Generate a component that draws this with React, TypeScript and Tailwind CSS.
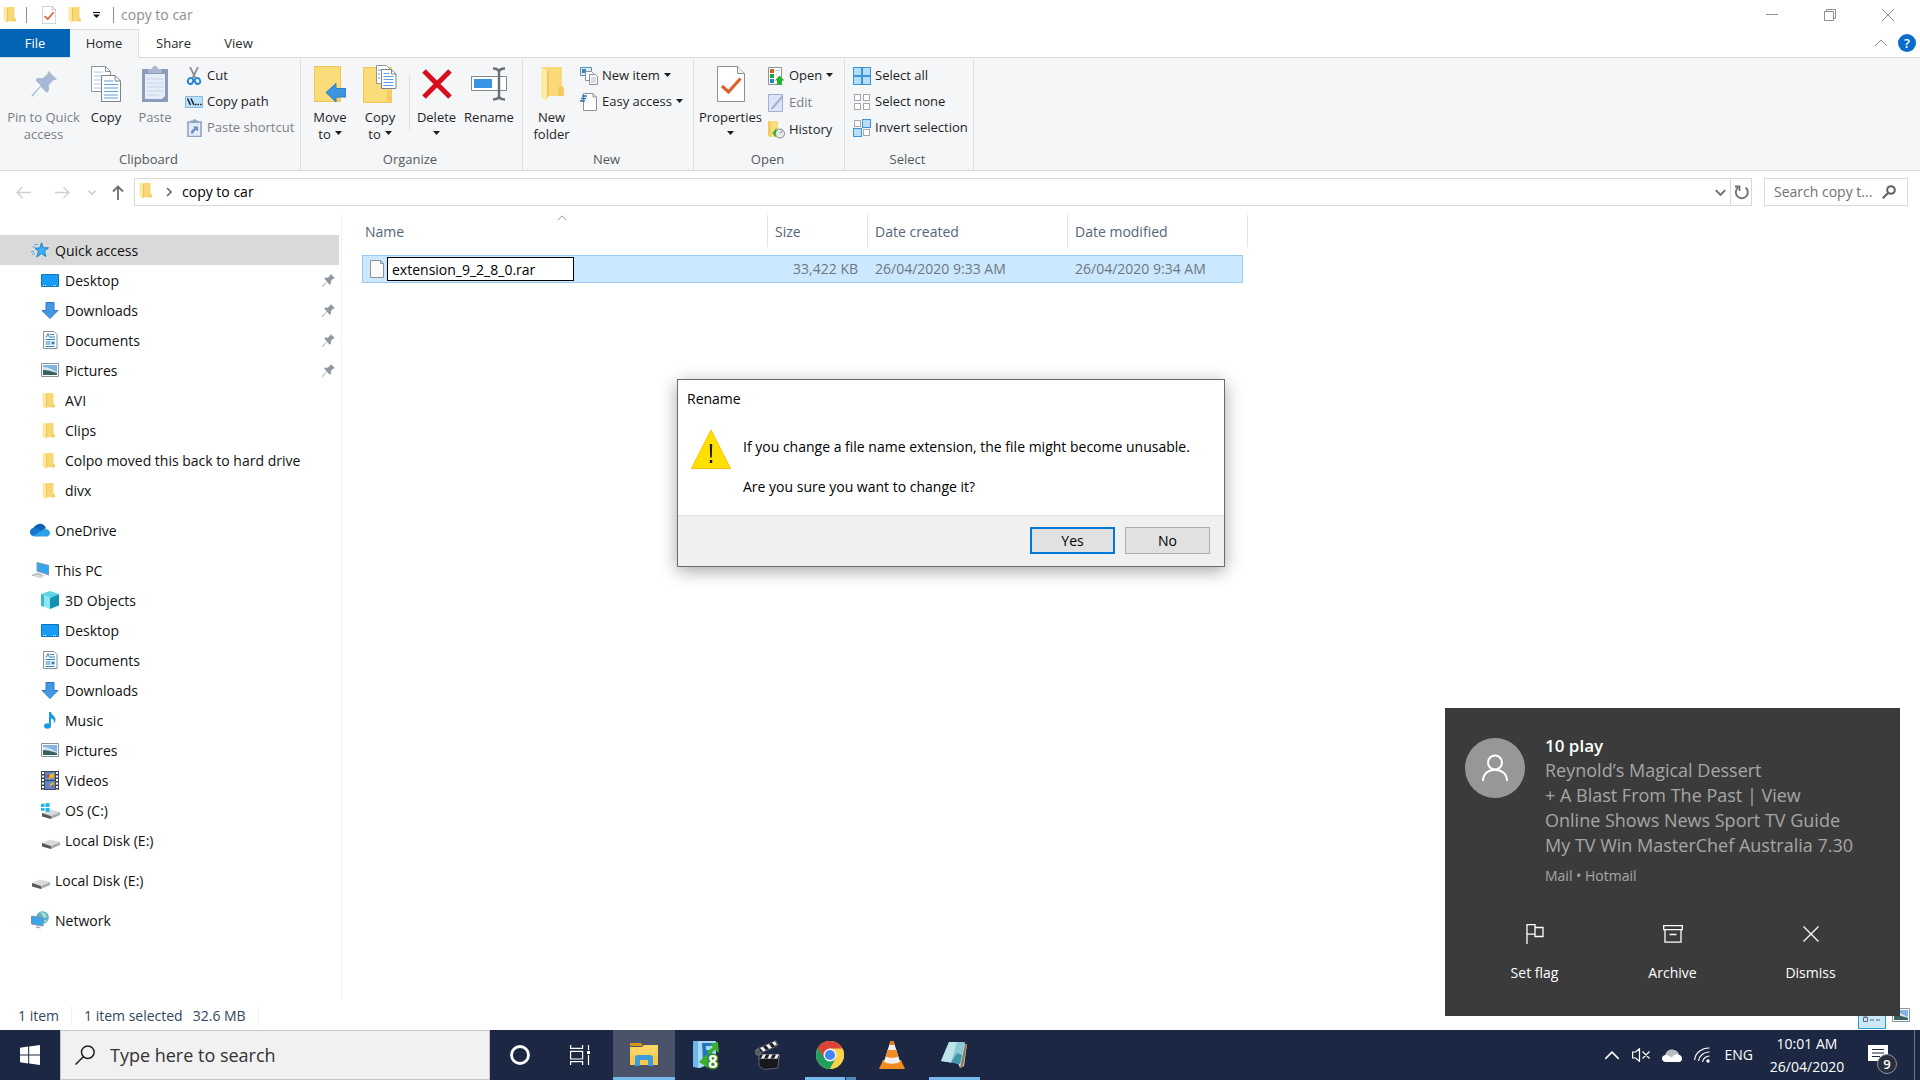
import { useState } from "react";
import type { ReactNode } from "react";

/* ---------- icons ---------- */

function FolderIcon({ className = "w-[13px] h-[17px]" }: { className?: string }) {
  return (
    <svg className={className} viewBox="0 0 13 17" fill="none">
      <path d="M3.5 1h8v12.5l1.2 1.8H4z" fill="#f8d775" />
      <path d="M11.5 11.5l1.3 1v2.8H9z" fill="#f5cd5f" />
      <path d="M.5.5L5 2v12.6L3.6 16.8.5 14.8z" fill="#fde9a6" />
      <path d="M3.9 2v14.6L5 14.8V2z" fill="#eec55a" />
    </svg>
  );
}

function PinIcon({ className, color }: { className: string; color: string }) {
  return (
    <svg className={className} viewBox="0 0 26 26" fill={color}>
      <path d="M17.5 0L26 8.500l-2.500.6-.8-.3-5 5.400.3 5.300-2.300 2.200-6-6L1.800 25.300.3 25.700l.4-1.500 8.900-9.800-5.300-5.300 2.200-2.100 5.200.3 5.200-4.900-.3-.9z" />
    </svg>
  );
}

function CheckPage({ className }: { className: string }) {
  return (
    <svg className={className} viewBox="0 0 28 36" fill="none">
      <path d="M.5.500h20l7 7v28H.5z" fill="#fff" stroke="#8b8f94" />
      <path d="M20.500.5v7h7" fill="#eef0f2" stroke="#8b8f94" />
      <path d="M5 20l6.500 6L23.500 12.500" stroke="#e0602b" strokeWidth="3.200" />
    </svg>
  );
}

function CopyIcon() {
  return (
    <svg className="w-[30px] h-9" viewBox="0 0 30 36" fill="none">
      <path d="M.5.500h14l5 5v20H.5z" fill="#fff" stroke="#8f959b" />
      <path d="M14.500.5v5h5" stroke="#8f959b" />
      <path d="M3 6h9M3 10h9M3 14h9M3 18h9M3 22h7" stroke="#a9c9ea" strokeWidth="1.200" />
      <path d="M10.500 9.500h13.500l5.500 5.500v20.500h-19z" fill="#fff" stroke="#7d838a" />
      <path d="M24 9.500V15h5.500" stroke="#7d838a" />
      <path d="M13 15h9M13 18.500h14M13 22h14M13 25.500h14M13 29h14M13 32h14" stroke="#5d9fe0" strokeWidth="1.200" />
    </svg>
  );
}

function PasteIcon() {
  return (
    <svg className="w-[26px] h-9" viewBox="0 0 26 36" fill="none">
      <path d="M0 3h26v33H0z" fill="#8c9cb8" />
      <path d="M3 8h20v22l-3 3H3z" fill="#e6ecf7" />
      <path d="M5 13h16M5 17h16M5 21h16M5 25h16M5 29h12" stroke="#c8d4ea" />
      <path d="M6 7V3h4c0-4 6-4 6 0h4v4z" fill="#a9b7cf" />
    </svg>
  );
}

function CutIcon() {
  return (
    <svg className="w-[18px] h-[18px]" viewBox="0 0 18 18" fill="none">
      <path d="M5 0l5.500 11M13 0L7.500 11" stroke="#8d9297" strokeWidth="1.800" />
      <ellipse cx="5.500" cy="14" rx="2.600" ry="3" transform="rotate(20 5.500 14)" stroke="#2a86d1" strokeWidth="2" />
      <ellipse cx="12.500" cy="14" rx="2.600" ry="3" transform="rotate(-20 12.500 14)" stroke="#2a86d1" strokeWidth="2" />
    </svg>
  );
}

function CopyPathIcon() {
  return (
    <svg className="w-[18px] h-3" viewBox="0 0 18 12" fill="none">
      <path d="M.5.500h17v11H.5z" fill="#bfe0fa" stroke="#86b7e0" />
      <path d="M2.500 2.500l3 6.500M6 2.500L9 9" stroke="#10202e" strokeWidth="1.500" />
      <path d="M10 8.500h1.500M12.500 8.500H14M15 8.500h1.500" stroke="#10202e" strokeWidth="1.500" />
    </svg>
  );
}

function PasteShortcutIcon() {
  return (
    <svg className="w-[18px] h-[18px]" viewBox="0 0 18 18" fill="none">
      <path d="M3 3h13v14.500H3z" fill="#e3ebf8" stroke="#8fa3c6" strokeWidth="1.600" />
      <path d="M6 4V1.500h2C8.200-.3 10.800-.3 11 1.500h2V4z" fill="#8fa3c6" />
      <path d="M6 14.500c0-3 1-4 3.500-5.200L8 7.500h5v5l-1.500-1.600C9.500 11.500 8.500 12.500 8.500 14.500z" fill="#6f8bbd" />
    </svg>
  );
}

function MoveToIcon() {
  return (
    <svg className="w-8 h-9" viewBox="0 0 32 36" fill="none">
      <path d="M.5.500h26v35H.5z" fill="#fbdc7b" stroke="#f0c652" />
      <path d="M22 25h5v11h-5z" fill="#f4cd62" />
      <path d="M12 26.500l10-9v5h10v8.500H22v5z" fill="#3c93df" stroke="#2c7cc4" />
    </svg>
  );
}

function CopyToIcon() {
  return (
    <svg className="w-[34px] h-[38px]" viewBox="0 0 34 38" fill="none">
      <path d="M.5 2.500h28v35H.5z" fill="#fbdc7b" stroke="#f0c652" />
      <path d="M24 25h5v13h-5z" fill="#f4cd62" />
      <path d="M13.500.500h10l3 3v15h-13z" fill="#fff" stroke="#8f959b" />
      <path d="M18.500 4.500h10l4.500 4.500v14.500H18.500z" fill="#fff" stroke="#7d838a" />
      <path d="M28.500 4.500V9H33" stroke="#7d838a" />
      <path d="M20.500 8.500h6M20.500 11.500h10M20.500 14.500h10M20.500 17.500h10M20.500 20.500h10M15 5h3M15 9h2M15 13h2" stroke="#5d9fe0" />
    </svg>
  );
}

function DeleteIcon() {
  return (
    <svg className="w-8 h-8" viewBox="0 0 32 32" fill="none" stroke="#d70f1d" strokeWidth="5">
      <path d="M3 3l26 26M29 3L3 29" />
    </svg>
  );
}

function RenameIcon() {
  return (
    <svg className="w-9 h-[34px]" viewBox="0 0 36 34" fill="none">
      <path d="M.5 9.500h35v14H.5z" fill="#fff" stroke="#83888d" />
      <path d="M3 12h18v9H3z" fill="#3793e4" />
      <path d="M22 1.500c4 0 6 1 6 4v23c0 3-2 4-6 4M34 1.500c-4 0-6 1-6 4v23c0 3 2 4 6 4" stroke="#6b7075" strokeWidth="2.400" />
    </svg>
  );
}

function NewFolderIcon() {
  return (
    <svg className="w-6 h-[34px]" viewBox="0 0 24 34" fill="none">
      <path d="M1 0h21v19l2 2v8H7z" fill="#f9d978" />
      <path d="M18 20l5-1 1 10h-6z" fill="#f3ca5e" />
      <path d="M1 0l8 4v24l-3.500 6L1 30z" fill="#fdeaa9" />
      <path d="M7 3.500v28L9 28V4z" fill="#eec55a" />
    </svg>
  );
}

function NewItemIcon() {
  return (
    <svg className="w-[18px] h-[18px]" viewBox="0 0 18 18" fill="none">
      <path d="M.5.500h11v8H.5z" fill="#d7ecfa" stroke="#5b8db5" />
      <path d="M2 2h4v4H2z" fill="#3f83b5" />
      <path d="M5.500 4.500h6l2 2v7h-8z" fill="#fff" stroke="#8c9298" />
      <path d="M9.500 7.500h6l2 2v8h-8z" fill="#fff" stroke="#8c9298" />
      <path d="M11 11h5M11 13h5M11 15h5" stroke="#b9b6d4" />
    </svg>
  );
}

function EasyAccessIcon() {
  return (
    <svg className="w-[18px] h-[18px]" viewBox="0 0 18 18" fill="none">
      <path d="M3.500.500H13L16.500 4v13.500h-13z" fill="#fff" stroke="#8c9298" />
      <path d="M13 .5V4h3.500" stroke="#8c9298" />
      <path d="M2 3h5M1 5.500h5M0 8h5" stroke="#2a6ea6" strokeWidth="1.400" />
    </svg>
  );
}

function OpenIcon() {
  return (
    <svg className="w-[17px] h-[18px]" viewBox="0 0 17 18" fill="none">
      <path d="M.5.500h13v17H.5z" fill="#fff" stroke="#8c9298" />
      <path d="M2 2h4v4H2z" fill="#dd5a1f" />
      <path d="M2 7h4v4H2z" fill="#24a336" />
      <path d="M2 12h4v4H2z" fill="#2a7dcb" />
      <path d="M7.500 3.500H12M7.500 8H9" stroke="#c2c6ca" />
      <path d="M11.500 8.500l5 5H14V18H9v-4.500H6.800z" fill="#2bb02f" />
    </svg>
  );
}

function EditIcon() {
  return (
    <svg className="w-[17px] h-[18px]" viewBox="0 0 17 18" fill="none">
      <path d="M.5.500h14v17H.5z" fill="#dbe5f6" stroke="#9fb2d3" />
      <path d="M15.500 3L5.500 14.500 3 16l.8-3L14 1.500z" fill="#a3b3cd" />
    </svg>
  );
}

function HistoryIcon() {
  return (
    <svg className="w-[17px] h-[18px]" viewBox="0 0 17 18" fill="none">
      <path d="M0 0h10v16H3L0 15z" fill="#fbdc7b" />
      <path d="M0 0l3 1v15l-3-1z" fill="#f3cb5f" />
      <circle cx="12" cy="12.500" r="4.500" fill="#e9ecee" stroke="#868b90" />
      <path d="M12 12.500l2.500-3" stroke="#6b7075" />
      <path d="M4 12.500l4.500-5.500v3c-1.500 1.500-1.500 4 0 6-2-.3-3-1.500-3-3.500z" fill="#2bb02f" />
    </svg>
  );
}

const CELLS = [
  [1, 1],
  [10, 1],
  [1, 10],
  [10, 10],
];

function SelectIcon({ picked }: { picked: number[] }) {
  return (
    <svg className="w-[18px] h-[18px]" viewBox="0 0 18 18">
      {CELLS.map(([x, y], i) =>
        picked.includes(i) ? (
          <rect key={i} x={x - 0.5} y={y - 0.5} width="8" height="8" fill="#b5defc" stroke="#3f94d6" />
        ) : (
          <rect key={i} x={x + 0.5} y={y + 0.5} width="6" height="6" fill="#fff" stroke="#a5a9ad" />
        )
      )}
    </svg>
  );
}

function StarIcon() {
  return (
    <svg className="w-[18px] h-[17px]" viewBox="0 0 18 17" fill="none">
      <path d="M10.500.8l1.800 5h5.200l-4 3.300 1.300 5.400-4.300-3-4.700 3.600 1.700-5.700-3.500-3.200 4.800-.2z" fill="#3db1f5" stroke="#1e7fc4" />
      <path d="M3 2.500h4M1.500 5h3M0 9.500h3M1 12h3" stroke="#5aa9dd" />
    </svg>
  );
}

function DesktopIcon() {
  return (
    <svg className="w-[18px] h-[13px]" viewBox="0 0 18 13" fill="none">
      <path d="M.5.500h17v12H.5z" fill="#189bf5" stroke="#0f76be" />
      <path d="M2 11.500h3M12 11.500h4" stroke="#fff" strokeDasharray="1 1" />
    </svg>
  );
}

function DownloadIcon() {
  return (
    <svg className="w-[18px] h-[17px]" viewBox="0 0 18 17">
      <path d="M5 .5h8v8h4L9 16.500 1 8.500h4z" fill="#4398e4" stroke="#2f7cc4" />
    </svg>
  );
}

function DocumentIcon() {
  return (
    <svg className="w-[18px] h-[18px]" viewBox="0 0 18 18" fill="none">
      <path d="M2.500.500h10.500l3 3v14H2.500z" fill="#fff" stroke="#8a8f94" />
      <path d="M5 6.500l2-4 1.500 4M9 3.500h4M9 6h5M4.500 8.500h9.500M4.500 11h5M4.500 13h5M4.500 15.500h9" stroke="#2b83c6" />
      <path d="M10.500 10.500h3v3h-3z" fill="#3e7fb2" />
    </svg>
  );
}

function PictureIcon() {
  return (
    <svg className="w-[18px] h-[14px]" viewBox="0 0 18 14" fill="none">
      <path d="M.5.500h17v13H.5z" fill="#fff" stroke="#8a93a0" />
      <path d="M2 2h14v10H2z" fill="#7fb4e3" />
      <path d="M2 4c5 0 8 2 14 5v1H2z" fill="#d3e6f2" />
      <path d="M2 7c4 0 8 1 14 3v2H2z" fill="#37635f" />
    </svg>
  );
}

function OneDriveIcon() {
  return (
    <svg className="w-5 h-[14px]" viewBox="0 0 20 14">
      <path d="M4 8a4 4 0 0 1 1-5 6.500 6.500 0 0 1 11 2l-5 4z" fill="#0f62b5" />
      <path d="M0 9.500A4 4 0 0 1 5 5c3 0 4 1 6 2.500L6 13H4a4 4 0 0 1-4-3.500z" fill="#1476cc" />
      <path d="M3 13l8-5c2-3 8-3 9 1.500.3 2-1.200 4-3.500 4H4.500z" fill="#2aa1ea" />
    </svg>
  );
}

function PcIcon() {
  return (
    <svg className="w-[18px] h-[17px]" viewBox="0 0 18 17">
      <path d="M6 .5l12 3v9.500L6 9z" fill="#35a5ee" stroke="#8798a6" />
      <path d="M0 13l7-2.500 7 3-5 3z" fill="#d4d8db" />
      <path d="M1 13.500l6-2 4 1.800" stroke="#aab0b5" fill="none" />
    </svg>
  );
}

function CubeIcon() {
  return (
    <svg className="w-[18px] h-[18px]" viewBox="0 0 18 18">
      <path d="M9 0l9 3-9 4L0 3z" fill="#5fd4e6" />
      <path d="M0 3l9 4v11l-9-3.500z" fill="#8ee6f0" />
      <path d="M18 3L9 7v11l9-3.500z" fill="#1493b5" />
      <path d="M0 3l3 1.300V16l-3-1.500z" fill="#36b8d0" />
    </svg>
  );
}

function MusicIcon() {
  return (
    <svg className="w-[18px] h-[17px]" viewBox="0 0 18 17">
      <ellipse cx="6.500" cy="14" rx="3.500" ry="2.800" fill="#1a9be4" />
      <path d="M8 0h2c.3 3 4.500 4 4.500 7.500 0 1.500-.6 3-1.700 4 .8-3-.6-4.500-2.800-5V14H8z" fill="#1a9be4" />
    </svg>
  );
}

function VideoIcon() {
  return (
    <svg className="w-[18px] h-[19px]" viewBox="0 0 18 19" fill="none">
      <path d="M0 0h18v19H0z" fill="#44484d" />
      <path d="M2 1v18M16 1v18" stroke="#fff" strokeWidth="2" strokeDasharray="2 1.500" />
      <path d="M4 1h10v8H4zM4 10h10v8H4z" fill="#5d84cf" />
      <path d="M9 3l4-1v5l-6 1zM9 13l3-2 1 2-4 3z" fill="#e4b52c" />
      <path d="M5 5l3-2v4zM10 15l2-1v3z" fill="#c0392b" />
    </svg>
  );
}

function DiskIcon({ windows = false }: { windows?: boolean }) {
  return (
    <svg className="w-[19px] h-[17px]" viewBox="0 0 19 17">
      <path d="M1 11l8-3.500 10 2.500-9 4z" fill="#d9dadb" />
      <path d="M1 11l9 3v3l-9-2.500z" fill="#55585b" />
      <path d="M10 14l9-4v3l-9 4z" fill="#a9acaf" />
      {windows && <path d="M0 2l3.500-.5V5H0zM4.500 1.300L8.500 1v4h-4zM0 6h3.500v3L0 8.500zM4.500 6h4v4l-4-.5z" fill="#1fb5e8" />}
    </svg>
  );
}

function NetworkIcon() {
  return (
    <svg className="w-[18px] h-[18px]" viewBox="0 0 18 18">
      <circle cx="11.500" cy="6.500" r="6.300" fill="#5cb0c9" />
      <path d="M9 1l5 1 2 4-3 1-2-3zM13 9l3 0-2 3z" fill="#a9dcc9" />
      <path d="M.5 5l11.500 2v8L.5 13z" fill="#3aa5e8" stroke="#7c93a3" />
      <path d="M5 15l4 1 1 1.500-5-.8z" fill="#9fb0bb" />
    </svg>
  );
}

function Chevron({ className, d = "M1 7l6-6 6 6", width = 1 }: { className: string; d?: string; width?: number }) {
  return (
    <svg className={className} viewBox="0 0 14 8" fill="none" stroke="currentColor" strokeWidth={width}>
      <path d={d} />
    </svg>
  );
}

function Caret() {
  return (
    <svg className="mb-[3px] w-[7px] h-1 shrink-0" viewBox="0 0 7 4" fill="#1e1e1e">
      <path d="M0 0h7L3.500 4z" />
    </svg>
  );
}

/* ---------- ribbon ---------- */

function BigButton({
  icon,
  label,
  second,
  caret,
  disabled,
  className,
}: {
  icon: ReactNode;
  label: string;
  second?: string;
  caret?: boolean;
  disabled?: boolean;
  className: string;
}) {
  return (
    <button
      disabled={disabled}
      className={`flex shrink-0 flex-col items-center whitespace-nowrap pt-1 text-[13px] leading-[17px] text-[#1f1f1f] disabled:text-[#7c7f82] ${className}`}
    >
      <span className="mb-1 flex h-[42px] shrink-0 items-center justify-center">{icon}</span>
      <span>{label}</span>
      {(second || caret) && (
        <span className="flex h-[17px] items-center gap-1">
          {second}
          {caret && <Caret />}
        </span>
      )}
    </button>
  );
}

function SmallButton({ icon, label, caret, disabled }: { icon: ReactNode; label: string; caret?: boolean; disabled?: boolean }) {
  return (
    <button
      disabled={disabled}
      className="flex h-[26px] items-center gap-1 whitespace-nowrap text-[13px] text-[#1f1f1f] disabled:text-[#7c7f82]"
    >
      <span className="flex w-[18px] justify-center">{icon}</span>
      <span>{label}</span>
      {caret && <Caret />}
    </button>
  );
}

function Group({ label, className, children }: { label: string; className: string; children: ReactNode }) {
  return (
    <section className={`flex shrink-0 flex-col border-r border-[#dcdfe2] ${className}`}>
      <div className="flex h-[90px]">{children}</div>
      <h2 className="pr-[3px] text-center text-[13px] leading-5 text-[#55585b]">{label}</h2>
    </section>
  );
}

function Ribbon() {
  return (
    <div className="flex h-[114px] border-y border-[#d7dadc] bg-[#f4f6f8] pt-px">
      <Group label="Clipboard" className="w-[301px]">
        <BigButton className="w-[87px]" disabled icon={<PinIcon className="w-[26px] h-[26px]" color="#a6b8d3" />} label="Pin to Quick" second="access" />
        <BigButton className="w-[38px]" icon={<CopyIcon />} label="Copy" />
        <BigButton className="w-[60px]" disabled icon={<PasteIcon />} label="Paste" />
        <div className="pt-1">
          <SmallButton icon={<CutIcon />} label="Cut" />
          <SmallButton icon={<CopyPathIcon />} label="Copy path" />
          <SmallButton icon={<PasteShortcutIcon />} label="Paste shortcut" disabled />
        </div>
      </Group>
      <Group label="Organize" className="w-[222px]">
        <BigButton className="ml-1 w-[50px]" icon={<MoveToIcon />} label="Move" second="to" caret />
        <BigButton className="w-[50px]" icon={<CopyToIcon />} label="Copy" second="to" caret />
        <span className="mt-4 ml-1 h-14 w-px bg-[#dcdfe2]" />
        <BigButton className="w-[53px]" icon={<DeleteIcon />} label="Delete" caret />
        <BigButton className="w-[52px]" icon={<RenameIcon />} label="Rename" />
      </Group>
      <Group label="New" className="w-[171px]">
        <BigButton className="w-[57px]" icon={<NewFolderIcon />} label="New" second="folder" />
        <div className="pt-1">
          <SmallButton icon={<NewItemIcon />} label="New item" caret />
          <SmallButton icon={<EasyAccessIcon />} label="Easy access" caret />
        </div>
      </Group>
      <Group label="Open" className="w-[151px]">
        <BigButton className="w-[73px]" icon={<CheckPage className="w-7 h-9" />} label="Properties" caret />
        <div className="flex flex-col gap-px pt-1">
          <SmallButton icon={<OpenIcon />} label="Open" caret />
          <SmallButton icon={<EditIcon />} label="Edit" disabled />
          <SmallButton icon={<HistoryIcon />} label="History" />
        </div>
      </Group>
      <Group label="Select" className="w-[129px]">
        <div className="pt-1 pl-2">
          <SmallButton icon={<SelectIcon picked={[0, 1, 2, 3]} />} label="Select all" />
          <SmallButton icon={<SelectIcon picked={[]} />} label="Select none" />
          <SmallButton icon={<SelectIcon picked={[1, 2]} />} label="Invert selection" />
        </div>
      </Group>
    </div>
  );
}

/* ---------- window top ---------- */

function TitleBar() {
  return (
    <header className="flex h-[29px] items-center justify-between pl-[3px] pr-[3px] text-[#8f8f8f]">
      <div className="flex items-center">
        <FolderIcon />
        <span className="ml-[10px] mr-[15px] h-4 w-px bg-[#8f8f8f]" />
        <CheckPage className="w-[14px] h-[18px]" />
        <span className="ml-3">
          <FolderIcon />
        </span>
        <button aria-label="Customize Quick Access Toolbar" className="ml-3">
          <svg className="w-[7px] h-[6px]" viewBox="0 0 7 6" fill="#111">
            <path d="M0 0h7v1H0zM0 2.500h7L3.500 6z" />
          </svg>
        </button>
        <span className="ml-[13px] mr-[7px] h-4 w-px bg-[#8f8f8f]" />
        <h1 className="text-sm">copy to car</h1>
      </div>
      <div className="flex">
        <button aria-label="Minimize" className="flex w-[58px] justify-center">
          <svg className="w-3 h-3" viewBox="0 0 12 12" fill="none" stroke="currentColor">
            <path d="M0 5.500h12" />
          </svg>
        </button>
        <button aria-label="Restore" className="flex w-[58px] justify-center">
          <svg className="w-3 h-3" viewBox="0 0 12 12" fill="none" stroke="currentColor">
            <path d="M.5 2.500h9v9h-9zM2.500 2.500v-2h9v9h-2" />
          </svg>
        </button>
        <button aria-label="Close" className="flex w-[58px] justify-center">
          <svg className="w-3 h-3" viewBox="0 0 12 12" fill="none" stroke="currentColor">
            <path d="M0 0l12 12M12 0L0 12" />
          </svg>
        </button>
      </div>
    </header>
  );
}

function Tabs() {
  return (
    <div className="flex h-7 items-stretch text-[13px] text-[#2b2b2b]">
      <button className="w-[70px] bg-[#0364b5] pt-[2px] text-white">File</button>
      <button className="relative z-10 -mb-px w-[69px] border border-b-0 border-l-0 border-[#dcdfe2] bg-[#f4f6f8]">Home</button>
      <button className="w-[69px] pt-[2px]">Share</button>
      <button className="w-[61px] pt-[2px]">View</button>
      <div className="ml-auto flex items-center gap-[10px] pr-1">
        <button aria-label="Minimize the Ribbon" className="text-[#8f8f8f]">
          <Chevron className="w-[14px] h-2" />
        </button>
        <button
          aria-label="Help"
          className="flex h-[18px] w-[18px] items-center justify-center rounded-full bg-[#0a6ccd] text-[13px] leading-none font-semibold text-white"
        >
          ?
        </button>
      </div>
    </div>
  );
}

function AddressRow() {
  return (
    <div className="flex h-11 items-start pt-[7px] pr-3">
      <div className="flex h-7 w-[134px] shrink-0 items-center pl-4">
        <button aria-label="Back" disabled className="text-[#cfcfcf]">
          <svg className="w-[15px] h-[13px]" viewBox="0 0 15 13" fill="none" stroke="currentColor" strokeWidth="1.300">
            <path d="M15 6.500H1M6.500 1L1 6.500 6.500 12" />
          </svg>
        </button>
        <button aria-label="Forward" disabled className="ml-6 text-[#cfcfcf]">
          <svg className="w-[15px] h-[13px]" viewBox="0 0 15 13" fill="none" stroke="currentColor" strokeWidth="1.300">
            <path d="M0 6.500h14M8.500 1L14 6.500 8.500 12" />
          </svg>
        </button>
        <button aria-label="Recent locations" className="ml-[18px] text-[#cfcfcf]">
          <Chevron className="w-2 h-[5px]" d="M1 1l6 6 6-6" width={3} />
        </button>
        <button aria-label="Up" className="ml-4 text-[#6d6d6d]">
          <svg className="w-3 h-[15px]" viewBox="0 0 12 15" fill="none" stroke="currentColor" strokeWidth="1.800">
            <path d="M6 15V1.500M1 6.500l5-5 5 5" />
          </svg>
        </button>
      </div>
      <div className="flex h-7 flex-1 items-center border border-[#d9d9d9] pl-1">
        <span className="-mt-[3px]">
          <FolderIcon />
        </span>
        <svg className="ml-[14px] w-[6px] h-[10px]" viewBox="0 0 6 10" fill="none" stroke="#6b6b6b" strokeWidth="1.600">
          <path d="M1 1l4 4-4 4" />
        </svg>
        <button className="ml-[10px] text-sm text-black">copy to car</button>
        <button aria-label="Previous locations" className="ml-auto px-1 text-[#6d6d6d]">
          <Chevron className="w-[11px] h-[7px]" d="M1 1l6 6 6-6" width={2.5} />
        </button>
        <button aria-label="Refresh" className="flex h-full w-[21px] items-center justify-center border-l border-[#d9d9d9] text-[#6d6d6d]">
          <svg className="w-[15px] h-[15px]" viewBox="0 0 15 15" fill="none" stroke="currentColor" strokeWidth="1.800">
            <path d="M11.500 2.500A6 6 0 1 1 4 2.600M1 1.500h4.500V6" />
          </svg>
        </button>
      </div>
      <label className="ml-3 flex h-7 w-[144px] items-center border border-[#d9d9d9] pl-[9px] pr-[11px]">
        <input
          aria-label="Search copy to car"
          placeholder="Search copy t..."
          className="w-0 min-w-0 flex-1 text-sm outline-none placeholder:text-[#717171]"
        />
        <svg className="w-[14px] h-[14px]" viewBox="0 0 14 14" fill="none" stroke="#5f5f5f" strokeWidth="2">
          <circle cx="9" cy="5" r="3.800" />
          <path d="M6.300 7.700L.8 13.200" />
        </svg>
      </label>
    </div>
  );
}

/* ---------- navigation pane ---------- */

type NavItem = { name: string; icon: ReactNode; pinned?: boolean };

const folder = <FolderIcon className="mr-[3px] w-[13px] h-[17px]" />;

const NAV: { root: NavItem; items: NavItem[] }[] = [
  {
    root: { name: "Quick access", icon: <StarIcon /> },
    items: [
      { name: "Desktop", icon: <DesktopIcon />, pinned: true },
      { name: "Downloads", icon: <DownloadIcon />, pinned: true },
      { name: "Documents", icon: <DocumentIcon />, pinned: true },
      { name: "Pictures", icon: <PictureIcon />, pinned: true },
      { name: "AVI", icon: folder },
      { name: "Clips", icon: folder },
      { name: "Colpo moved this back to hard drive", icon: folder },
      { name: "divx", icon: folder },
    ],
  },
  { root: { name: "OneDrive", icon: <OneDriveIcon /> }, items: [] },
  {
    root: { name: "This PC", icon: <PcIcon /> },
    items: [
      { name: "3D Objects", icon: <CubeIcon /> },
      { name: "Desktop", icon: <DesktopIcon /> },
      { name: "Documents", icon: <DocumentIcon /> },
      { name: "Downloads", icon: <DownloadIcon /> },
      { name: "Music", icon: <MusicIcon /> },
      { name: "Pictures", icon: <PictureIcon /> },
      { name: "Videos", icon: <VideoIcon /> },
      { name: "OS (C:)", icon: <DiskIcon windows /> },
      { name: "Local Disk (E:)", icon: <DiskIcon /> },
    ],
  },
  { root: { name: "Local Disk (E:)", icon: <DiskIcon /> }, items: [] },
  { root: { name: "Network", icon: <NetworkIcon /> }, items: [] },
];

function NavRow({ item, className }: { item: NavItem; className: string }) {
  return (
    <a href="#" className={`flex h-[30px] items-center gap-[5px] pr-1 ${className}`}>
      <span className="flex w-5 shrink-0 justify-center">{item.icon}</span>
      <span className="pt-[2px]">{item.name}</span>
      {item.pinned && (
        <span className="ml-auto">
          <PinIcon className="w-[13px] h-[13px]" color="#8e979f" />
        </span>
      )}
    </a>
  );
}

function NavPane() {
  return (
    <nav className="w-[342px] shrink-0 border-r border-[#f3f3f3] pt-5 pr-[2px] text-sm text-[#111]">
      {NAV.map(({ root, items }, i) => (
        <div key={i} className="mb-[10px]">
          <NavRow item={root} className={i === 0 ? "bg-[#d9d9d9] pl-[30px]" : "pl-[30px]"} />
          {items.map((item) => (
            <NavRow key={item.name} item={item} className="pl-10" />
          ))}
        </div>
      ))}
    </nav>
  );
}

/* ---------- file list ---------- */

const HEAD = "flex h-8 items-center border-r border-[#e2e2e2] pt-[2px] font-normal";
const CELL = "h-7 border-y border-[#99c9ef] bg-[#cce8ff] p-0";

function FileList() {
  const [name, setName] = useState("extension_9_2_8_0.rar");

  return (
    <main className="min-w-0 flex-1 pl-5">
      <table className="w-[886px] table-fixed border-separate border-spacing-0 text-sm">
        <colgroup>
          <col className="w-[406px]" />
          <col className="w-[100px]" />
          <col className="w-[200px]" />
          <col className="w-[175px]" />
          <col className="w-[5px]" />
        </colgroup>
        <thead className="text-left text-[#54657a]">
          <tr>
            <th className="relative p-0 pb-2">
              <Chevron className="absolute top-0 left-[195px] h-[6px] w-[10px] text-[#6d6d6d]" />
              <div className={`${HEAD} pl-[3px]`}>Name</div>
            </th>
            <th className="p-0 pb-2">
              <div className={`${HEAD} pl-[7px]`}>Size</div>
            </th>
            <th className="p-0 pb-2">
              <div className={`${HEAD} pl-[7px]`}>Date created</div>
            </th>
            <th colSpan={2} className="p-0 pb-2">
              <div className={`${HEAD} pl-[7px]`}>Date modified</div>
            </th>
          </tr>
        </thead>
        <tbody className="text-[#6d7781]">
          <tr>
            <td className={`${CELL} border-l`}>
              <div className="flex items-center gap-[3px] pl-[7px]">
                <svg className="w-[14px] h-[18px]" viewBox="0 0 14 18" fill="none">
                  <path d="M.5.500h10l3 3v14H.5z" fill="#fafafa" stroke="#8d9297" />
                  <path d="M10.500.5v3h3" stroke="#8d9297" />
                </svg>
                <input
                  aria-label="File name"
                  value={name}
                  onChange={(e) => setName(e.target.value)}
                  className="h-6 w-[187px] border border-black bg-white px-1 text-sm text-black outline-none"
                />
              </div>
            </td>
            <td className={`${CELL} pr-[10px] text-right`}>33,422 KB</td>
            <td className={`${CELL} pl-[7px]`}>26/04/2020 9:33 AM</td>
            <td className={`${CELL} border-r pl-[7px]`}>26/04/2020 9:34 AM</td>
          </tr>
        </tbody>
      </table>
    </main>
  );
}

function StatusBar() {
  return (
    <footer className="flex h-[30px] items-center justify-between pl-[18px] pr-[10px] text-sm text-[#33475f]">
      <div className="flex items-center pt-[2px]">
        <span>1 item</span>
        <span className="mx-3 h-5 w-px bg-[#f1f1f1]" />
        <span>1 item selected</span>
        <span className="ml-[10px]">32.6 MB</span>
        <span className="ml-3 h-5 w-px bg-[#f1f1f1]" />
      </div>
      <div className="flex items-center gap-[6px]">
        <button aria-label="Details view" className="flex h-7 w-7 items-center justify-center border border-[#26a0da] bg-[#cbe8f6]">
          <svg className="w-[18px] h-[14px]" viewBox="0 0 18 14" fill="none" stroke="#5d6b78">
            <path d="M.5.500h4v3h-4zM.5 5h4v3h-4zM.5 9.500h4v4h-4zM7 2h4M13 2h4M7 7h4M13 7h4M7 12h4M13 12h4" />
          </svg>
        </button>
        <button aria-label="Large icons view">
          <PictureIcon />
        </button>
      </div>
    </footer>
  );
}

/* ---------- overlays ---------- */

function RenameDialog() {
  return (
    <div
      role="dialog"
      aria-labelledby="rename-title"
      className="absolute top-[379px] left-[677px] flex h-[188px] w-[548px] flex-col border border-[#6b6b6b] bg-white text-sm text-black shadow-[0_4px_16px_rgba(0,0,0,0.35)]"
    >
      <h2 id="rename-title" className="px-[9px] pt-[9px] leading-5">
        Rename
      </h2>
      <div className="flex flex-1 items-start gap-3 pt-[20px] pl-[13px]">
        <svg className="h-10 w-10 shrink-0" viewBox="0 0 40 40">
          <path d="M20 1l19.500 38.500H.5z" fill="#ffe000" stroke="#f5c211" />
          <path d="M18.800 15h2.400l-.4 13.500h-1.600zM18.800 31h2.400v3h-2.400z" fill="#1a1a1a" />
        </svg>
        <div className="pt-2 leading-5 whitespace-nowrap">
          <p>If you change a file name extension, the file might become unusable.</p>
          <p className="mt-5">Are you sure you want to change it?</p>
        </div>
      </div>
      <div className="flex h-[51px] justify-end gap-[10px] border-t border-[#dfdfdf] bg-[#f0f0f0] pt-[11px] pr-[14px]">
        <button className="h-[27px] w-[85px] border-2 border-[#0078d7] bg-[#e1e1e1]">Yes</button>
        <button className="h-[27px] w-[85px] border border-[#adadad] bg-[#e1e1e1]">No</button>
      </div>
    </div>
  );
}

function ToastAction({ icon, label }: { icon: ReactNode; label: string }) {
  return (
    <button className="flex w-[138px] flex-col items-center text-sm text-white">
      <span className="flex h-5 items-center">{icon}</span>
      <span className="mt-[19px] leading-5">{label}</span>
    </button>
  );
}

function Toast() {
  return (
    <aside className="absolute right-5 bottom-16 flex h-[308px] w-[455px] flex-col justify-between bg-[#3b3b3b] pt-[25px] pb-[33px]">
      <div className="flex gap-5 pl-5">
        <div className="mt-[5px] flex h-[60px] w-[60px] items-center justify-center rounded-full bg-[#979797]">
          <svg className="w-[26px] h-[28px]" viewBox="0 0 26 28" fill="none" stroke="#fff" strokeWidth="2">
            <circle cx="13" cy="8.500" r="7" />
            <path d="M1 27c0-15 24-15 24 0" />
          </svg>
        </div>
        <div className="text-lg leading-[25px] whitespace-nowrap text-[#a6a6a6]">
          <h2 className="text-[17px] leading-[25px] font-semibold text-white">10 play</h2>
          <p>Reynold’s Magical Dessert</p>
          <p>+ A Blast From The Past | View</p>
          <p>Online Shows News Sport TV Guide</p>
          <p>My TV Win MasterChef Australia 7.30</p>
          <p className="mt-2 text-sm leading-5">Mail • Hotmail</p>
        </div>
      </div>
      <div className="flex justify-center">
        <ToastAction
          label="Set flag"
          icon={
            <svg className="w-[18px] h-5" viewBox="0 0 18 20" fill="none" stroke="#fff" strokeWidth="1.300">
              <path d="M1 20V.700h8v9.500H1M9 3.500h8v9H9v-2.300" />
            </svg>
          }
        />
        <ToastAction
          label="Archive"
          icon={
            <svg className="w-5 h-[18px]" viewBox="0 0 20 18" fill="none" stroke="#fff" strokeWidth="1.300">
              <path d="M.7.700h18.600v4H.7zM2 4.700v12.500h16V4.700M6.500 9.500h7" />
            </svg>
          }
        />
        <ToastAction
          label="Dismiss"
          icon={
            <svg className="w-4 h-4" viewBox="0 0 16 16" fill="none" stroke="#fff" strokeWidth="1.300">
              <path d="M.5.500l15 15M15.500.500l-15 15" />
            </svg>
          }
        />
      </div>
    </aside>
  );
}

/* ---------- taskbar ---------- */

function ExplorerLogo() {
  return (
    <svg className="w-7 h-6" viewBox="0 0 28 24">
      <path d="M0 0h11l2 3H0z" fill="#d9940f" />
      <path d="M0 4l12 0 2-2h14v20H0z" fill="#fcd462" />
      <path d="M0 12h28v10H0z" fill="#f9c848" />
      <path d="M5 14l2-2h14l2 2v9h-5v-6h-8v6H5z" fill="#3c9bdc" />
    </svg>
  );
}

function BackupLogo() {
  return (
    <svg className="w-7 h-[30px]" viewBox="0 0 28 30">
      <path d="M1 1h5v27l-5-1z" fill="#6eb6ee" />
      <path d="M6 1h18v20L8 28H6z" fill="#a8d8f8" />
      <path d="M10 3h12v3h-8v4h6v9l-9 4z" fill="#2375bd" />
      <path d="M26 2l1 11-4-3-6 5-2-3 6-5-3-3zM7 22l8-8 1 5 5 1-6 8-3-3z" fill="#3dae2b" />
      <text x="16" y="28" fontSize="17" fontWeight="700" fontFamily="Open Sans, sans-serif" fill="#fff" stroke="#2f8a22" strokeWidth="3" paintOrder="stroke">
        8
      </text>
    </svg>
  );
}

function ClapperLogo() {
  return (
    <svg className="w-7 h-[30px]" viewBox="0 0 28 30" stroke="#8b8f96" strokeWidth=".6">
      <path d="M5 16l20-1-1 13-14 1.500-5-3.500z" fill="#16181b" />
      <path d="M3 9L22 .8l2 4.700L5 13.500z" fill="#1b1d20" />
      <path d="M5 14.500h20v4H5z" fill="#1b1d20" />
      <path d="M6 8l3-1.300 3 3.500-3 1.300zM12 5.300l3-1.300 3 3.700-3 1.200zM18 2.600l3-1.300 2 3.500-2.500 1zM9 14.500h3l-2 4H7zM15.500 14.500h3l-2 4h-3zM22 14.500h3l-2 4h-3z" fill="#f2f2f2" stroke="none" />
      <path d="M1.500 10l3-1 2.500 4-2 2.500-3-1z" fill="#55595e" />
    </svg>
  );
}

function ChromeLogo() {
  return (
    <svg className="w-7 h-7" viewBox="0 0 28 28">
      <circle cx="14" cy="14" r="14" fill="#fdd24b" />
      <path d="M14 14L1.900 7A14 14 0 0 0 14 28l6-10.500z" fill="#1da05d" />
      <path d="M14 7.500h12.400A14 14 0 0 1 14 28l5.600-10.700z" fill="#fdd24b" />
      <path d="M1.900 7A14 14 0 0 1 26.400 7.500H14L8 17z" fill="#db4437" />
      <circle cx="14" cy="14" r="6.500" fill="#f4f6f8" />
      <circle cx="14" cy="14" r="5.100" fill="#4587f2" />
    </svg>
  );
}

function VlcLogo() {
  return (
    <svg className="w-[26px] h-7" viewBox="0 0 26 28">
      <path d="M4 19h18l4 9H0z" fill="#f08a1d" />
      <path d="M11.500 0h3L21 20.500c-2 3-14 3-16 0z" fill="#f0f0f0" />
      <path d="M11.500 0h3l1.300 4h-5.600z" fill="#e87c12" />
      <path d="M8.800 9h8.400l2 6.300c-3 2-9.400 2-12.400 0z" fill="#ef8b22" />
    </svg>
  );
}

function NotepadLogo() {
  return (
    <svg className="w-7 h-[26px]" viewBox="0 0 28 26">
      <path d="M10 1l17 1-3 22-4 2z" fill="#d7dde0" />
      <path d="M9 0h16l-5 22-19-3z" fill="#8cc8d6" />
      <path d="M9 0h8l-6 20.500-10-1.500z" fill="#bfe3ea" />
      <path d="M17 11l5 2-2 9-9-1.400z" fill="#3f97ab" />
      <path d="M25 2l2 0-4 22-3 2z" fill="#8a7a52" />
    </svg>
  );
}

const APPS = [
  { name: "File Explorer", icon: <ExplorerLogo />, state: "active" },
  { name: "Video copier", icon: <BackupLogo />, state: "" },
  { name: "Clapper", icon: <ClapperLogo />, state: "" },
  { name: "Google Chrome", icon: <ChromeLogo />, state: "many" },
  { name: "VLC media player", icon: <VlcLogo />, state: "" },
  { name: "Notepad", icon: <NotepadLogo />, state: "open" },
];

function Taskbar() {
  return (
    <div className="flex h-[50px] items-stretch bg-[#1b2743] text-white">
      <button aria-label="Start" className="flex w-[60px] items-center justify-center">
        <svg className="w-5 h-5" viewBox="0 0 20 20" fill="#fff">
          <path d="M0 2.800L8.200 1.600v8H0zM9.200 1.500L20 0v9.600H9.200zM0 10.500h8.200v8L0 17.300zM9.200 10.500H20V20L9.200 18.600z" />
        </svg>
      </button>
      <label className="flex w-[430px] items-center border border-[#c4c4c4] bg-[#f1f1f1] pl-[14px]">
        <svg className="w-5 h-5" viewBox="0 0 20 20" fill="none" stroke="#222" strokeWidth="1.500">
          <circle cx="12.800" cy="7.200" r="6.300" />
          <path d="M8.300 11.700L.5 19.500" />
        </svg>
        <input
          aria-label="Type here to search"
          placeholder="Type here to search"
          className="ml-[15px] flex-1 text-lg outline-none placeholder:text-[#333]"
        />
      </label>
      <button aria-label="Cortana" className="flex w-[60px] items-center justify-center">
        <svg className="w-5 h-5" viewBox="0 0 20 20" fill="none" stroke="#fff" strokeWidth="2.800">
          <circle cx="10" cy="10" r="8.500" />
        </svg>
      </button>
      <button aria-label="Task View" className="mr-[3px] flex w-[60px] items-center justify-center">
        <svg className="w-5 h-5" viewBox="0 0 20 20" fill="none" stroke="#fff" strokeWidth="1.200">
          <path d="M.6 0v3.400h12V0M.6 6.400h12v7.600h-12zM.6 20v-3.400h12V20M18.500 0v5M18.500 10v10" />
          <path d="M17 6h3v3h-3z" fill="#fff" stroke="none" />
        </svg>
      </button>
      {APPS.map(({ name, icon, state }) => (
        <button
          key={name}
          aria-label={name}
          className={`flex w-[62px] flex-col items-center ${state === "active" ? "bg-[#4a5369]" : ""}`}
        >
          <span className="flex h-[47px] items-center pt-[3px]">{icon}</span>
          {state === "active" && <span className="h-[3px] w-full bg-[#76b9ed]" />}
          {state === "open" && <span className="h-[3px] w-[51px] bg-[#76b9ed]" />}
          {state === "many" && (
            <span className="flex h-[3px] w-[51px] gap-px">
              <span className="w-10 bg-[#76b9ed]" />
              <span className="w-[10px] bg-[#5188b5]" />
            </span>
          )}
        </button>
      ))}
      <div className="ml-auto flex items-center text-sm">
        <button aria-label="Show hidden icons">
          <Chevron className="w-4 h-[9px]" width={1.3} />
        </button>
        <button aria-label="Speakers muted" className="ml-3">
          <svg className="w-[18px] h-[14px]" viewBox="0 0 18 14" fill="none" stroke="#fff" strokeWidth="1.200">
            <path d="M.6 4h3L7.500.700v12.600L3.600 10h-3zM10.500 3.500l7 7M17.500 3.500l-7 7" />
          </svg>
        </button>
        <button aria-label="OneDrive" className="ml-3">
          <svg className="w-5 h-[13px]" viewBox="0 0 20 13">
            <path d="M3 8C3 2 8-.5 12 1c3 .5 4 2 5 4L8 11z" fill="#b9bcc4" />
            <path d="M0 9.500C0 6 4 5 7 7l3 1.500c1-4 9-5 10 .5.300 2-1 4-3.500 4H4c-2.500 0-4-1.500-4-3.500z" fill="#fff" />
          </svg>
        </button>
        <button aria-label="Network" className="ml-3">
          <svg className="w-[17px] h-4" viewBox="0 0 17 16" fill="none" stroke="#fff" strokeWidth="1.200">
            <path d="M.7 13C1 6 8 .7 15.500 1M4.500 14C5 9 10 4.700 15.500 5M8.500 15c.3-3.500 3.500-6 7-6" />
            <circle cx="14" cy="14" r="1.700" fill="#fff" stroke="none" />
          </svg>
        </button>
        <button className="ml-[14px]">ENG</button>
        <button className="ml-[14px] w-20 text-center leading-[23px]">
          10:01 AM
          <br />
          26/04/2020
        </button>
        <button aria-label="Notifications" className="relative ml-[21px]">
          <svg className="w-5 h-5" viewBox="0 0 20 20" fill="none">
            <path d="M0 0h20v16h-6l-4 4v-4H0z" fill="#fff" />
            <path d="M4 4.500h12M4 8h12M4 11.500h8" stroke="#1b2743" strokeWidth="1.200" />
          </svg>
          <span className="absolute top-[9px] left-[9px] flex h-5 w-5 items-center justify-center rounded-full border border-[#8d94a3] bg-[#2a2f3c] text-[13px] leading-none font-semibold">
            9
          </span>
        </button>
        <span className="ml-[26px] h-full w-px bg-[#6c7589]" />
        <button aria-label="Show desktop" className="h-full w-[5px]" />
      </div>
    </div>
  );
}

export default function App() {
  return (
    <div className="relative flex min-h-screen flex-col overflow-hidden bg-white font-['Open_Sans',sans-serif]">
      <TitleBar />
      <Tabs />
      <Ribbon />
      <AddressRow />
      <div className="flex flex-1">
        <NavPane />
        <FileList />
      </div>
      <StatusBar />
      <Taskbar />
      <RenameDialog />
      <Toast />
    </div>
  );
}
